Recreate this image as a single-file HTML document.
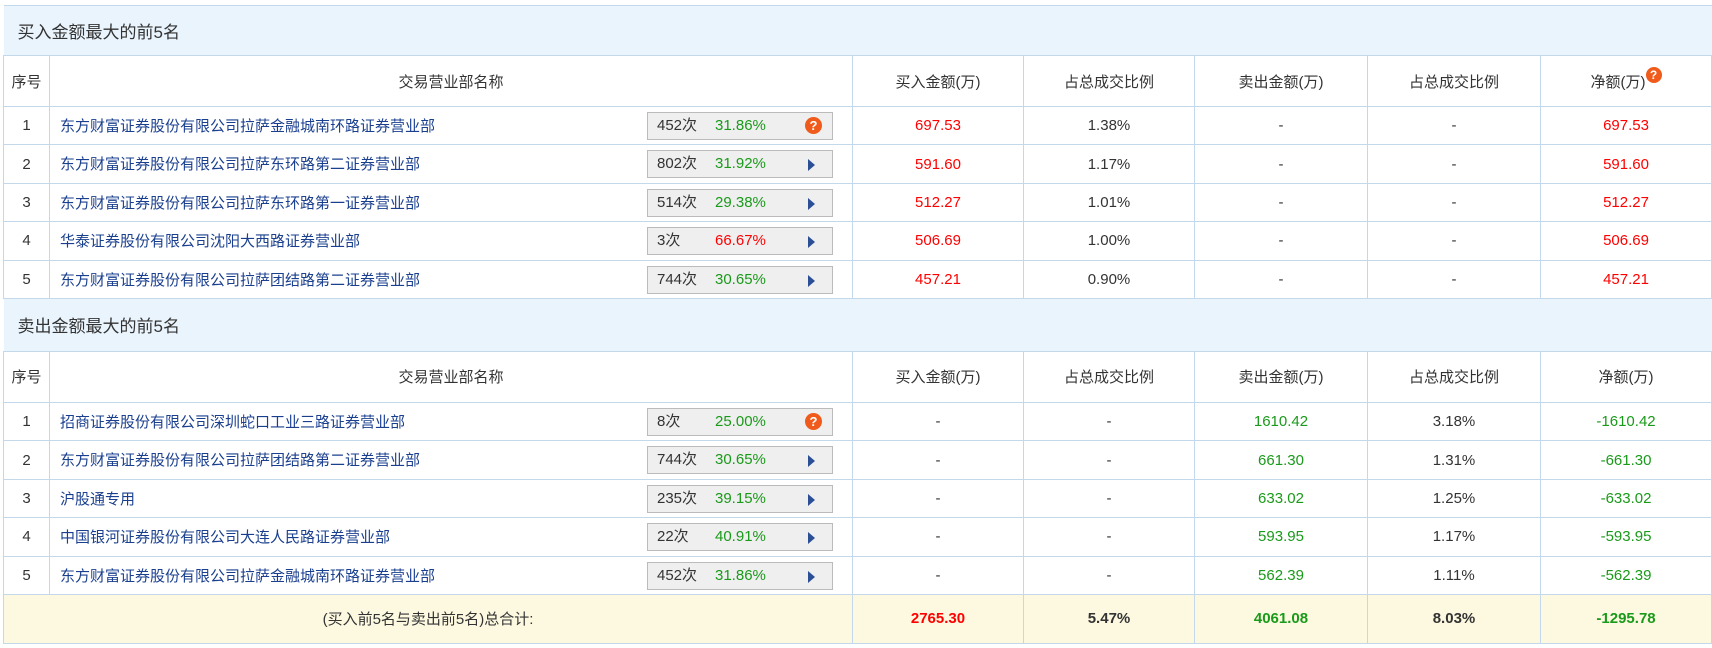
<!DOCTYPE html>
<html><head><meta charset="utf-8"><style>
body{margin:0;background:#fff;width:1712px;height:648px;overflow:hidden;font-family:"Liberation Sans","Noto Sans CJK SC",sans-serif;font-size:15px;color:#333}
table{position:absolute;left:3px;top:5px;border-collapse:collapse;table-layout:fixed;width:1708px}
td{border:1px solid #c4d8eb;text-align:center;padding:0;height:37.4px;white-space:nowrap;position:relative}
tr.t td{background:#eaf4fd;text-align:left;padding-left:14px;height:49px;font-size:17px;border-left:none;border-right:none}
tr.t2 td{height:52px}
tr.h td{height:50px}
td.n{text-align:left;padding-left:10px;color:#1a3f8f;vertical-align:top;padding-top:8px;height:29.4px}
.box{position:absolute;left:597px;top:5px;width:184px;height:26px;background:#efefef;border:1px solid #bbb;text-align:left;font-size:15px;line-height:26px;color:#333}
.box .c{position:absolute;left:9px}
.box .p{position:absolute;left:67px;color:#1a9a1a}
.box .a{position:absolute;left:160px;top:8px;width:0;height:0;border-left:7px solid #2b4f95;border-top:6px solid transparent;border-bottom:6px solid transparent}
.q{position:absolute;left:157px;top:4px;width:17px;height:17px;border-radius:50%;background:#f05a1a;color:#fff;font-weight:bold;font-size:13px;line-height:17px;text-align:center}
.r{color:#f00}.g{color:#1a9a1a}
tr.tot td{background:#fdf9e0;height:48px;font-weight:bold}
</style></head><body>
<table>
<colgroup><col style="width:46px"><col style="width:803px"><col style="width:171px"><col style="width:171px"><col style="width:173px"><col style="width:173px"><col style="width:171px"></colgroup>
<tr class="t"><td colspan="7">买入金额最大的前5名</td></tr>
<tr class="h"><td>序号</td><td>交易营业部名称</td><td>买入金额(万)</td><td>占总成交比例</td><td>卖出金额(万)</td><td>占总成交比例</td><td>净额(万)<span style="display:inline-block;width:16px;height:16px;border-radius:50%;background:#f05a1a;color:#fff;font-size:12px;font-weight:bold;line-height:16px;vertical-align:top;margin-top:-4px">?</span></td></tr>
<tr><td>1</td><td class="n">东方财富证券股份有限公司拉萨金融城南环路证券营业部<div class="box"><span class="c">452次</span><span class="p">31.86%</span><span class="q">?</span></div></td><td class="r">697.53</td><td>1.38%</td><td>-</td><td>-</td><td class="r">697.53</td></tr>
<tr><td>2</td><td class="n">东方财富证券股份有限公司拉萨东环路第二证券营业部<div class="box"><span class="c">802次</span><span class="p">31.92%</span><span class="a"></span></div></td><td class="r">591.60</td><td>1.17%</td><td>-</td><td>-</td><td class="r">591.60</td></tr>
<tr><td>3</td><td class="n">东方财富证券股份有限公司拉萨东环路第一证券营业部<div class="box"><span class="c">514次</span><span class="p">29.38%</span><span class="a"></span></div></td><td class="r">512.27</td><td>1.01%</td><td>-</td><td>-</td><td class="r">512.27</td></tr>
<tr><td>4</td><td class="n">华泰证券股份有限公司沈阳大西路证券营业部<div class="box"><span class="c">3次</span><span class="p" style="color:#f00">66.67%</span><span class="a"></span></div></td><td class="r">506.69</td><td>1.00%</td><td>-</td><td>-</td><td class="r">506.69</td></tr>
<tr><td>5</td><td class="n">东方财富证券股份有限公司拉萨团结路第二证券营业部<div class="box"><span class="c">744次</span><span class="p">30.65%</span><span class="a"></span></div></td><td class="r">457.21</td><td>0.90%</td><td>-</td><td>-</td><td class="r">457.21</td></tr>
<tr class="t t2"><td colspan="7">卖出金额最大的前5名</td></tr>
<tr class="h"><td>序号</td><td>交易营业部名称</td><td>买入金额(万)</td><td>占总成交比例</td><td>卖出金额(万)</td><td>占总成交比例</td><td>净额(万)</td></tr>
<tr><td>1</td><td class="n">招商证券股份有限公司深圳蛇口工业三路证券营业部<div class="box"><span class="c">8次</span><span class="p">25.00%</span><span class="q">?</span></div></td><td>-</td><td>-</td><td class="g">1610.42</td><td>3.18%</td><td class="g">-1610.42</td></tr>
<tr><td>2</td><td class="n">东方财富证券股份有限公司拉萨团结路第二证券营业部<div class="box"><span class="c">744次</span><span class="p">30.65%</span><span class="a"></span></div></td><td>-</td><td>-</td><td class="g">661.30</td><td>1.31%</td><td class="g">-661.30</td></tr>
<tr><td>3</td><td class="n">沪股通专用<div class="box"><span class="c">235次</span><span class="p">39.15%</span><span class="a"></span></div></td><td>-</td><td>-</td><td class="g">633.02</td><td>1.25%</td><td class="g">-633.02</td></tr>
<tr><td>4</td><td class="n">中国银河证券股份有限公司大连人民路证券营业部<div class="box"><span class="c">22次</span><span class="p">40.91%</span><span class="a"></span></div></td><td>-</td><td>-</td><td class="g">593.95</td><td>1.17%</td><td class="g">-593.95</td></tr>
<tr><td>5</td><td class="n">东方财富证券股份有限公司拉萨金融城南环路证券营业部<div class="box"><span class="c">452次</span><span class="p">31.86%</span><span class="a"></span></div></td><td>-</td><td>-</td><td class="g">562.39</td><td>1.11%</td><td class="g">-562.39</td></tr>
<tr class="tot"><td colspan="2" style="font-weight:normal">(买入前5名与卖出前5名)总合计:</td><td class="r">2765.30</td><td>5.47%</td><td class="g">4061.08</td><td>8.03%</td><td class="g">-1295.78</td></tr>
</table>
</body></html>
